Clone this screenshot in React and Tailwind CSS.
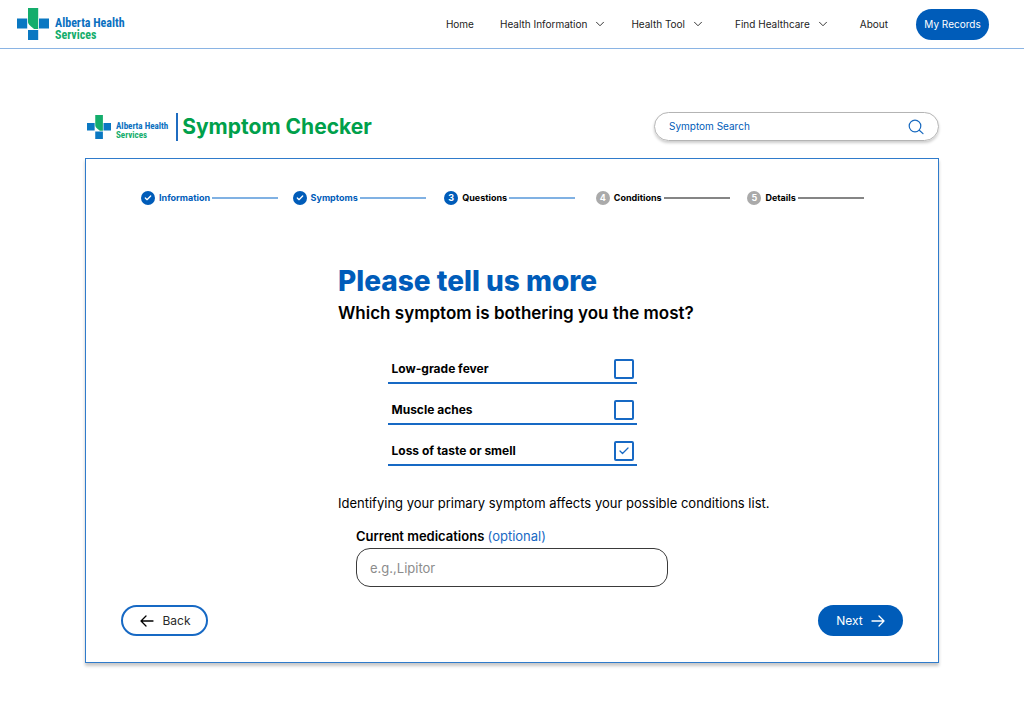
import React, { useState } from 'react';
import { Check, ChevronDown } from 'lucide-react';

const NAV = [
  { label: 'Home', space: 'mr-0.5' },
  { label: 'Health Information', menu: true },
  { label: 'Health Tool', menu: true, space: 'mr-1.5' },
  { label: 'Find Healthcare', menu: true, space: 'mr-1.5' },
  { label: 'About', space: 'mr-1' },
];

const STEPS = ['Information', 'Symptoms', 'Questions', 'Conditions', 'Details'];
const CURRENT = 2;

const SYMPTOMS = ['Low-grade fever', 'Muscle aches', 'Loss of taste or smell'];

function LogoMark({ className }) {
  return (
    <svg viewBox="0 0 32 32" className={className} aria-hidden="true">
      <path d="M0 10.5h10.2v10H0zM22 10.5h10v10H22zM11 22h10.2v10H11z" fill="#0a78c2" />
      <path d="M11 0h10.2v21h-4C14.5 18.8 11 16.5 11 14z" fill="#14ad6c" />
    </svg>
  );
}

function Arrow({ className }) {
  return (
    <svg viewBox="0 0 14 12" className={className} fill="none" stroke="currentColor" strokeWidth="1.3" strokeLinecap="round" strokeLinejoin="round" aria-hidden="true">
      <path d="M1 6h12M8 1l5 5-5 5" />
    </svg>
  );
}

function Header() {
  return (
    <header className="flex h-[49px] items-center justify-between border-b border-[#8ab4e4] pl-[17px] pr-[35px]">
      <a href="#home" className="flex items-center gap-1.5">
        <LogoMark className="h-8 w-8" />
        <span className="pt-2.5 font-['Liberation_Sans_Narrow','Roboto_Condensed','Liberation_Sans',sans-serif] text-[12px] font-bold leading-3 text-[#0a70c0]">
          <span className="block">Alberta Health</span>
          <span className="block text-[#14ad6c]">Services</span>
        </span>
      </a>
      <nav className="flex items-center gap-6 text-[10px] text-[#1c1c1c]">
        {NAV.map((item) => (
          <a key={item.label} href="#nav" className={`flex items-center gap-1.5 ${item.space || ''}`}>
            {item.label}
            {item.menu && <ChevronDown size={14} strokeWidth={1.5} />}
          </a>
        ))}
        <button className="h-[31px] w-[73px] rounded-full bg-[#005cb9] text-white">My Records</button>
      </nav>
    </header>
  );
}

function Stepper() {
  return (
    <ol className="grid grid-cols-5 pl-[55px] pr-[39px] text-[9px] font-bold">
      {STEPS.map((label, i) => (
        <li key={label} className="flex items-center">
          <span
            className={`mr-1 flex h-3.5 w-3.5 items-center justify-center rounded-full text-white ${
              i <= CURRENT ? 'bg-[#005cb9]' : 'bg-[#aaaaaa]'
            }`}
          >
            {i < CURRENT ? <Check size={8} strokeWidth={4} /> : i + 1}
          </span>
          <span className={i < CURRENT ? 'text-[#005cb9]' : 'text-black'}>{label}</span>
          <span className={`ml-0.5 h-0.5 w-[66px] ${i <= CURRENT ? 'bg-[#80b1e3]' : 'bg-[#858585]'}`} />
        </li>
      ))}
    </ol>
  );
}

export default function App() {
  const [picked, setPicked] = useState(['Loss of taste or smell']);

  const toggle = (s) =>
    setPicked((prev) => (prev.includes(s) ? prev.filter((p) => p !== s) : [...prev, s]));

  return (
    <div className="min-h-screen bg-white font-['Inter',sans-serif] text-black">
      <Header />

      <main className="mx-auto max-w-[854px] pt-[63px]">
        {/* Title + search */}
        <div className="mb-[17px] flex items-center justify-between">
          <div className="flex items-center">
            <LogoMark className="ml-0.5 h-6 w-6" />
            <span className="ml-[5px] mr-2 pt-2 font-['Liberation_Sans_Narrow','Roboto_Condensed','Liberation_Sans',sans-serif] text-[9px] font-bold leading-[9px] text-[#0a70c0]">
              <span className="block">Alberta Health</span>
              <span className="block text-[#14ad6c]">Services</span>
            </span>
            <h1 className="border-l-2 border-[#1f6cc0] pl-1 text-[21px] font-bold leading-7 text-[#00a04b]">
              Symptom Checker
            </h1>
          </div>
          <label className="flex h-[29px] w-[285px] items-center rounded-full border border-[#b4b4b4] pl-3.5 pr-3.5 shadow-[0_2px_3px_rgba(0,0,0,0.2)]">
            <input
              type="search"
              aria-label="Symptom Search"
              placeholder="Symptom Search"
              className="min-w-0 flex-1 text-[10px] outline-none placeholder:text-[#005cb9]"
            />
            <svg viewBox="0 0 16 16" className="h-4 w-4" fill="none" stroke="#1769bf" strokeWidth="1.2" strokeLinecap="round" aria-hidden="true">
              <circle cx="7" cy="7" r="5.8" />
              <path d="M11.3 11.3 15 14.6" />
            </svg>
          </label>
        </div>

        <section className="border border-[#2f7bcb] pb-[26px] pt-8 shadow-[0_3px_3px_rgba(0,0,0,0.22)]">
          <Stepper />

          <div className="mx-auto mt-[60px] w-[348px]">
            <h2 className="whitespace-nowrap text-[28px] font-extrabold leading-8 text-[#005cb9]">Please tell us more</h2>
            <p className="mt-1 whitespace-nowrap text-[17px] font-semibold leading-6">
              Which symptom is bothering you the most?
            </p>

            <div className="mx-auto mt-[18px] w-[249px] text-[12px] font-bold">
              {SYMPTOMS.map((s) => (
                <label key={s} className="flex h-[41px] items-end justify-between border-b-2 border-[#1769c4] pb-[3px] pl-1 pr-[3px]">
                  <span className="leading-5">{s}</span>
                  <span className="relative h-5 w-5">
                    <input
                      type="checkbox"
                      checked={picked.includes(s)}
                      onChange={() => toggle(s)}
                      className="block h-5 w-5 appearance-none rounded-xs border-2 border-[#1769c4]"
                    />
                    {picked.includes(s) && (
                      <Check size={12} strokeWidth={2.5} className="pointer-events-none absolute left-1 top-1 text-[#1769c4]" />
                    )}
                  </span>
                </label>
              ))}
            </div>

            <p className="mt-[27px] whitespace-nowrap text-[13px] leading-5">
              Identifying your primary symptom affects your possible conditions list.
            </p>

            <div className="mx-auto mt-[13px] w-[312px]">
              <label htmlFor="medications" className="block text-[13px] font-semibold leading-5">
                Current medications <span className="font-normal text-[#1769c4]">(optional)</span>
              </label>
              <input
                id="medications"
                type="text"
                placeholder="e.g.,Lipitor"
                className="mt-0.5 block h-[39px] w-full rounded-[14px] border border-[#3a3a3a] px-[13px] text-[13px] outline-none placeholder:text-[#8c8c8c]"
              />
            </div>
          </div>

          <div className="mt-[18px] flex justify-between px-[35px] text-[12px]">
            <button className="flex h-[31px] w-[87px] items-center justify-center gap-2 rounded-2xl border-2 border-[#1769c4] pl-0.5 text-[#2a2a2a]">
              <Arrow className="h-3 w-3.5 rotate-180 text-black" />
              Back
            </button>
            <button className="flex h-[31px] w-[85px] items-center justify-center gap-2 rounded-2xl bg-[#005cb9] text-white">
              Next
              <Arrow className="h-3 w-3.5" />
            </button>
          </div>
        </section>
      </main>
    </div>
  );
}
